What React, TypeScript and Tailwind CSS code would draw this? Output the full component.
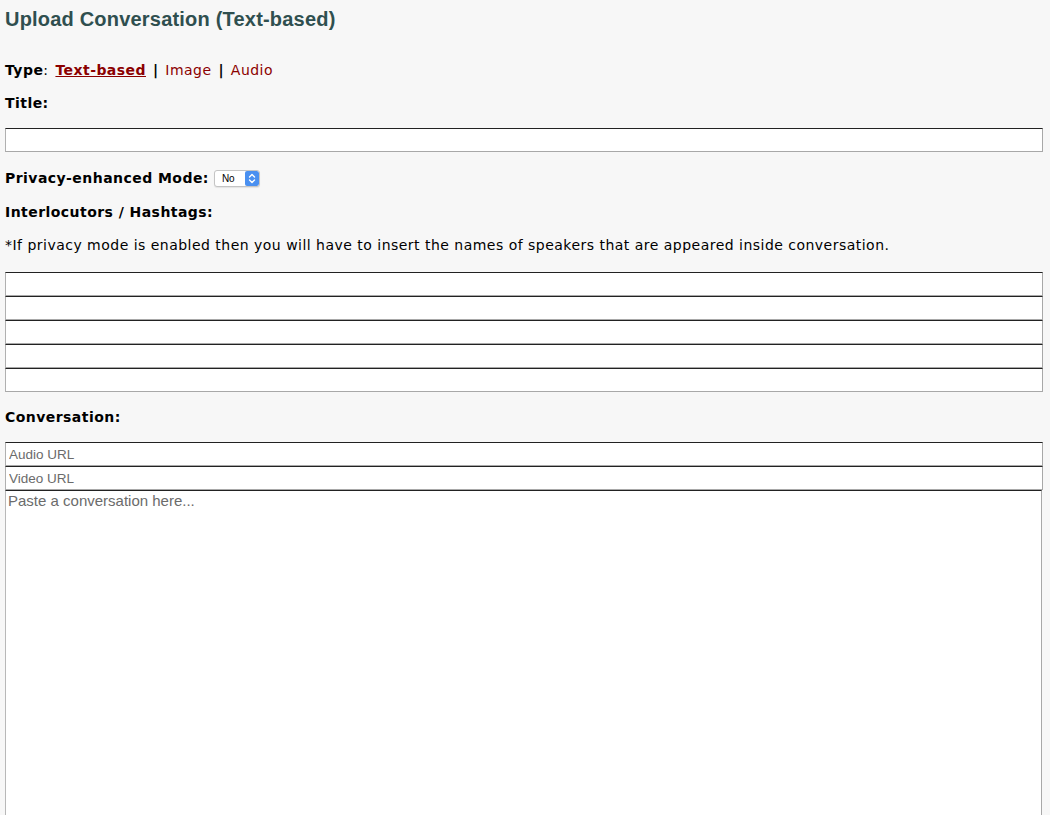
import React from 'react';

const verdana = { fontFamily: '"DejaVu Sans", Verdana, sans-serif' };

const inputCls =
  'block w-[1038px] h-[24px] bg-white border border-t-[#222] border-l-[#b0b0b0] border-b-[#a8a8a8] border-r-[#a8a8a8] px-[3px] text-[13.5px] text-[#333] placeholder:text-[#6b6b6b] outline-none';

const App = () => {
  return (
    <div className="h-[815px] bg-[#f7f7f7] px-[5px] overflow-hidden tracking-[0.45px]" style={verdana}>
      <h1
        className="pt-[8px] text-[20px] leading-[22px] font-bold text-[#2f4f4f] tracking-[0.2px]"
        style={{ fontFamily: '"Liberation Sans", Arial, sans-serif' }}
      >
        Upload Conversation (Text-based)
      </h1>

      <div className="mt-[31px] text-[14px] leading-[18px] text-black [word-spacing:2px]">
        <b>Type</b>:{' '}
        <a className="font-bold text-[#8b0000] underline">Text-based</a> <b>|</b>{' '}
        <a className="text-[#8b0000]">Image</a> <b>|</b>{' '}
        <a className="text-[#8b0000]">Audio</a>
      </div>

      <div className="mt-[15px] text-[14px] leading-[18px] font-bold">Title:</div>
      <input className={`${inputCls} mt-[16px]`} />

      <div className="mt-[17px] flex items-center h-[18px] text-[14px] font-bold">
        <span>Privacy-enhanced Mode:</span>
        <div className="ml-[5px] flex items-center h-[17px] w-[46px] rounded-[3px] border border-[#c4c4c4] bg-white shadow-[0_1px_1px_rgba(0,0,0,0.08)] overflow-hidden tracking-normal">
          <span
            className="flex-1 pl-[7px] text-[10px] font-normal text-black"
            style={{ fontFamily: '"Liberation Sans", Arial, sans-serif' }}
          >
            No
          </span>
          <span className="flex items-center justify-center w-[14px] h-full bg-[#4a90f0] rounded-[2px]">
            <svg width="8" height="11" viewBox="0 0 8 11" fill="none" stroke="white" strokeWidth="1.4" strokeLinecap="round" strokeLinejoin="round">
              <path d="M1.5 4 L4 1.5 L6.5 4" />
              <path d="M1.5 7 L4 9.5 L6.5 7" />
            </svg>
          </span>
        </div>
      </div>

      <div className="mt-[16px] text-[14px] leading-[18px] font-bold">Interlocutors / Hashtags:</div>
      <div className="mt-[15px] text-[14px] leading-[18px] tracking-[0.48px]">
        *If privacy mode is enabled then you will have to insert the names of speakers that are appeared inside conversation.
      </div>

      <div className="mt-[18px]">
        {[0, 1, 2, 3, 4].map((i) => (
          <input key={i} className={inputCls} />
        ))}
      </div>

      <div className="mt-[16px] text-[14px] leading-[18px] font-bold">Conversation:</div>
      <div className="mt-[16px] tracking-normal" style={{ fontFamily: '"Liberation Sans", Helvetica, Arial, sans-serif' }}>
        <input className={inputCls} placeholder="Audio URL" />
        <input className={inputCls} placeholder="Video URL" />
        <textarea
          className="block w-[1037px] h-[400px] resize-none bg-white border border-t-[#222] border-l-[#b8b8b8] border-b-[#a8a8a8] border-r-[#a8a8a8] px-[2px] pt-[1px] text-[15px] leading-[18px] text-[#333] placeholder:text-[#6b6b6b] outline-none"
          placeholder="Paste a conversation here..."
        />
      </div>
    </div>
  );
};

export default App;
